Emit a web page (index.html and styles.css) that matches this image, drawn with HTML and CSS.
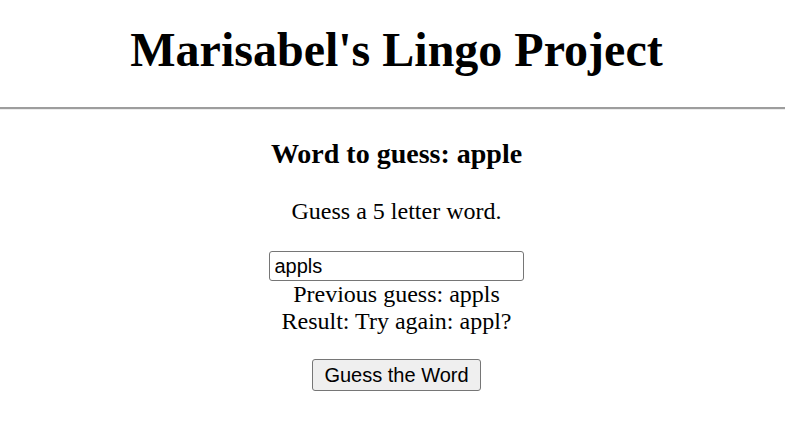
FILE: index.html
```html
<!DOCTYPE html>
<html lang="en">
<head>
<meta charset="utf-8">
<title>Marisabel's Lingo Project</title>
<link rel="stylesheet" href="styles.css">
</head>
<body>
  <header class="site-header">
    <h1 class="site-title">Marisabel's Lingo Project</h1>
  </header>
  <hr class="divider">
  <main class="game">
    <h3 class="target">Word to guess: apple</h3>
    <p class="prompt">Guess a 5 letter word.</p>
    <form class="guess-form">
      <input class="guess-input" type="text" value="appls">
      <div class="status-line">Previous guess: appls</div>
      <div class="status-line">Result: Try again: appl?</div>
      <div class="actions">
        <button class="guess-button" type="button">Guess the Word</button>
      </div>
    </form>
  </main>
</body>
</html>
```

FILE: styles.css
```css
html, body {
  margin: 0;
  padding: 0;
  background: #ffffff;
}

body {
  font-family: "Liberation Serif", "Times New Roman", serif;
  color: #000000;
  font-size: 24px;
}

.site-header {
  padding-left: 8px;
  text-align: center;
}

.site-title {
  font-size: 48px;
  line-height: 55px;
  font-weight: bold;
  margin: 22px 0 30px;
}

.divider {
  display: block;
  height: 0;
  margin: 0;
  border: 0;
  border-top: 2px solid #9d9d9d;
  border-bottom: 1px solid #ececec;
}

.game {
  padding-left: 8px;
  text-align: center;
}

.target {
  font-size: 28px;
  font-weight: bold;
  margin: 28px 0 0;
}

.prompt {
  font-size: 24px;
  margin: 28px 0 0;
}

.guess-form {
  margin: 0;
  padding-top: 25.5px;
}

.guess-input {
  display: block;
  box-sizing: border-box;
  width: 255px;
  height: 30px;
  margin: 0 auto;
  padding: 1px 4.5px 0;
  border: 1px solid #767676;
  border-radius: 3px;
  font-family: "Liberation Sans", Arial, sans-serif;
  font-size: 20px;
  color: #000000;
  background: #ffffff;
}

.status-line {
  font-size: 24px;
}

.actions {
  margin-top: 24px;
}

.guess-button {
  box-sizing: border-box;
  width: 169px;
  height: 32px;
  padding: 2px 10px 0;
  border: 1px solid #767676;
  border-radius: 3px;
  background: #efefef;
  font-family: "Liberation Sans", Arial, sans-serif;
  font-size: 20px;
  color: #000000;
}
```
